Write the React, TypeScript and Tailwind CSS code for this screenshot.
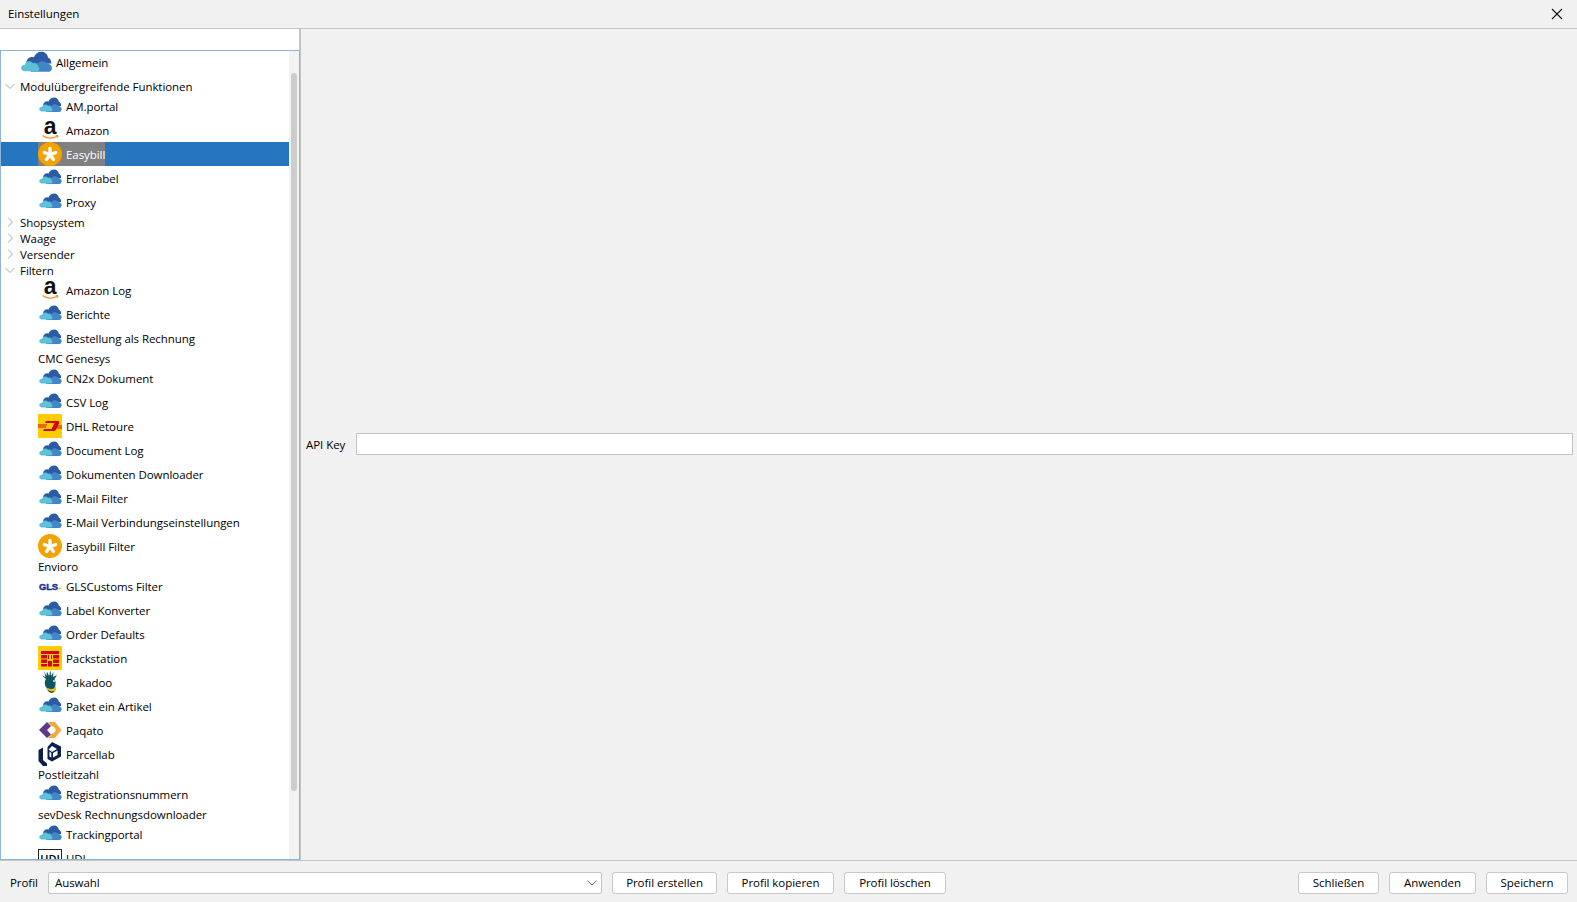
const font = "font-['Open_Sans','Noto_Sans',sans-serif]";

function Cloud({ big }: { big?: boolean }) {
  return (
    <svg viewBox="0 0 24 16" className={big ? 'w-[31px] h-[21px]' : 'w-[23px] h-[15px] mb-[3px]'}>
      <path d="M4 9C4.5 5.5 7.5 4 10 4.8C11 2 13 .5 16 .5C18.5.5 20.5 2.5 21 5C22.5 5.5 23.5 7 23.5 9.5L5 10Z" fill="#2d5aa5" />
      <path d="M9 16C6 16 5.5 13 7.5 11.5C8 9 11 8 13 9.5C14.5 7.5 18 7 20 9.5C22.5 9.5 24 11.5 24 13C24 15 22.5 16 20.5 16Z" fill="#4286c6" />
      <path d="M3 15.5C1 15.5 0 14 0 13C0 11.5 1.5 10.5 3 10.5C3.5 7.5 7.5 7 9.5 9.5C11.5 9 13.5 10.5 13.5 12.5C14.5 13 14.5 15.5 12.5 15.5Z" fill="#5cc1d4" />
    </svg>
  );
}

function AmazonIcon() {
  return (
    <svg viewBox="0 0 24 24" className="w-[24px] h-[24px] overflow-visible">
      <text x="12" y="16" textAnchor="middle" fontSize="23" fontWeight="700" fontFamily="'Liberation Sans', sans-serif" fill="#111">a</text>
      <path d="M4.5 17.5C9 21 15 21 19.5 18" fill="none" stroke="#f0962a" strokeWidth="1.3" />
      <path d="M17.5 17.5L20 17.5L19.5 20" fill="none" stroke="#f0962a" strokeWidth="1" />
    </svg>
  );
}

function EasybillIcon() {
  return (
    <svg viewBox="0 0 24 24" className="w-[24px] h-[24px]">
      <circle cx="12" cy="12" r="12" fill="#f5a100" />
      <g stroke="#fff" strokeWidth="3.4" strokeLinecap="round">
        <path d="M12 12.5V6.5" />
        <path d="M12 12.5L17.7 10.6" />
        <path d="M12 12.5L15.5 17.4" />
        <path d="M12 12.5L8.5 17.4" />
        <path d="M12 12.5L6.3 10.6" />
      </g>
    </svg>
  );
}

function DhlIcon() {
  return (
    <svg viewBox="0 0 24 24" className="w-[24px] h-[24px]">
      <rect width="24" height="24" fill="#ffcc00" />
      <g fill="#d40511">
        <path d="M0 10.5H9L8.5 11.5H0Z" />
        <path d="M0 12.5H8.5L8 13.5H0Z" />
        <path d="M8 7H20C21.5 7 21.5 8.5 21 9.5L18 15.5C17.5 16.5 16.5 17 15.5 17H5L6 15H13.5L16.5 9H7Z" />
        <path d="M19 11.5H24V12.5H18.5Z" />
        <path d="M18 13.5H24V14.5H17.5Z" />
      </g>
    </svg>
  );
}

function GlsIcon() {
  return (
    <svg viewBox="0 0 24 24" className="w-[24px] h-[24px]">
      <text x="1" y="15.5" fontSize="9.5" fontWeight="700" fontFamily="'Liberation Sans', sans-serif" fill="#15308c" stroke="#15308c" strokeWidth=".4" letterSpacing="-.2">GLS</text>
      <rect x="21" y="13.5" width="2" height="1.6" fill="#f5c400" />
    </svg>
  );
}

function PackstationIcon() {
  return (
    <svg viewBox="0 0 24 24" className="w-[24px] h-[24px]">
      <rect width="24" height="24" fill="#ffcc00" />
      <path d="M3 5H21V8H3Z" fill="#d40511" />
      <g fill="#d40511">
        <rect x="3" y="9" width="6" height="3.5" />
        <rect x="3" y="13.5" width="6" height="3.5" />
        <rect x="3" y="18" width="6" height="2.5" />
        <rect x="15" y="9" width="6" height="3.5" />
        <rect x="15" y="13.5" width="6" height="3.5" />
        <rect x="15" y="18" width="6" height="2.5" />
        <rect x="10" y="9" width="4" height="4" />
        <rect x="10" y="15" width="4" height="5.5" />
      </g>
      <rect x="11" y="9" width="2" height="4" fill="#ffcc00" />
    </svg>
  );
}

function PakadooIcon() {
  return (
    <svg viewBox="0 0 24 24" className="w-[24px] h-[24px]">
      <path d="M6 1L8.5 6L9 1.5L11 6L12.5 0L13 6L15.5 2L15 7L19 5L16.5 9C18 11 18 16 16 19L9 19C6 15 6.5 11 8 9L4 5.5L7.5 7Z" fill="#0f5660" />
      <path d="M8 17C10 23 16 25 18 20C18.5 18 18 16.5 17.5 16C17 19 13 20.5 8 17Z" fill="#e4c21c" />
      <path d="M9 19C10.5 23 14.5 24 16.5 21C13.5 22 11 21 9 19Z" fill="#173a55" />
      <circle cx="16" cy="11" r="1" fill="#d7f0f0" />
    </svg>
  );
}

function PaqatoIcon() {
  return (
    <svg viewBox="0 0 24 24" className="w-[24px] h-[24px]">
      <path d="M9 4L13 8L9 12L13 16.5L9 20L1 12Z" fill="#5b3a8c" />
      <path d="M10 4H17L23.5 12L17 20H10L14 15.5H15.5L18 12L15.5 8.5H14Z" fill="#f2a93b" />
    </svg>
  );
}

function ParcellabIcon() {
  return (
    <svg viewBox="0 0 24 24" className="w-[24px] h-[24px]">
      <path d="M14 0L23 4.5V14.5L14 19.5L9.5 17V5Z" fill="#0d1f4c" />
      <path d="M14 4L19 7L14 10L10.5 7.5ZM11.5 9.5L13.3 11V15.5L11.5 14.5ZM15 11L19.5 8.5V13L15 15.5Z" fill="#fff" />
      <path d="M.5 8L5 5.5V18L9 21.5V24H5L.5 19Z" fill="#0d1f4c" />
    </svg>
  );
}

function UdiIcon() {
  return (
    <div className="w-[24px] h-[18px] border border-[#222] bg-white flex items-center justify-center text-[11px] font-semibold leading-none">
      UDI
    </div>
  );
}

type Row = { label: string; icon?: React.ReactNode; kind?: 'group' | 'text'; open?: boolean; selected?: boolean };

const cloud = <Cloud />;

const rows: Row[] = [
  { label: 'Modulübergreifende Funktionen', kind: 'group', open: true },
  { label: 'AM.portal', icon: cloud },
  { label: 'Amazon', icon: <AmazonIcon /> },
  { label: 'Easybill', icon: <EasybillIcon />, selected: true },
  { label: 'Errorlabel', icon: cloud },
  { label: 'Proxy', icon: cloud },
  { label: 'Shopsystem', kind: 'group' },
  { label: 'Waage', kind: 'group' },
  { label: 'Versender', kind: 'group' },
  { label: 'Filtern', kind: 'group', open: true },
  { label: 'Amazon Log', icon: <AmazonIcon /> },
  { label: 'Berichte', icon: cloud },
  { label: 'Bestellung als Rechnung', icon: cloud },
  { label: 'CMC Genesys', kind: 'text' },
  { label: 'CN2x Dokument', icon: cloud },
  { label: 'CSV Log', icon: cloud },
  { label: 'DHL Retoure', icon: <DhlIcon /> },
  { label: 'Document Log', icon: cloud },
  { label: 'Dokumenten Downloader', icon: cloud },
  { label: 'E-Mail Filter', icon: cloud },
  { label: 'E-Mail Verbindungseinstellungen', icon: cloud },
  { label: 'Easybill Filter', icon: <EasybillIcon /> },
  { label: 'Envioro', kind: 'text' },
  { label: 'GLSCustoms Filter', icon: <GlsIcon /> },
  { label: 'Label Konverter', icon: cloud },
  { label: 'Order Defaults', icon: cloud },
  { label: 'Packstation', icon: <PackstationIcon /> },
  { label: 'Pakadoo', icon: <PakadooIcon /> },
  { label: 'Paket ein Artikel', icon: cloud },
  { label: 'Paqato', icon: <PaqatoIcon /> },
  { label: 'Parcellab', icon: <ParcellabIcon /> },
  { label: 'Postleitzahl', kind: 'text' },
  { label: 'Registrationsnummern', icon: cloud },
  { label: 'sevDesk Rechnungsdownloader', kind: 'text' },
  { label: 'Trackingportal', icon: cloud },
  { label: 'UDI', icon: <UdiIcon /> },
];

function TreeRow({ row }: { row: Row }) {
  if (row.kind === 'group') {
    return (
      <div className="h-[16px] flex items-center">
        <svg viewBox="0 0 10 10" className="w-[10px] h-[10px] ml-[4px] mr-[5px]" fill="none" stroke="#a6a6a6">
          {row.open ? <path d="M.5 3L5 7.5L9.5 3" /> : <path d="M3 .5L7.5 5L3 9.5" />}
        </svg>
        <span className="pt-[2px]">{row.label}</span>
      </div>
    );
  }
  if (row.kind === 'text') {
    return <div className="h-[16px] flex items-center pl-[37px] pt-[2px]">{row.label}</div>;
  }
  return (
    <div className={row.selected ? 'h-[24px] flex items-center pl-[37px] bg-[#2675bf] text-white' : 'h-[24px] flex items-center pl-[37px]'}>
      <div className={row.selected ? 'flex items-center bg-[#808080]' : 'flex items-center'}>
        <div className="w-[24px] h-[24px] flex items-center justify-center shrink-0">{row.icon}</div>
        <span className="ml-[4px] pt-[2px] whitespace-nowrap">{row.label}</span>
      </div>
    </div>
  );
}

export default function App() {
  return (
    <div className={`${font} w-[1577px] h-[902px] flex flex-col bg-[#f1f1f1] text-[11.5px] leading-[16px] tracking-[-0.06px] text-black overflow-hidden`}>
      <div className="h-[29px] shrink-0 flex items-center justify-between pl-[8px] pr-[14px] border-b border-[#c4c4c4]">
        <span>Einstellungen</span>
        <svg viewBox="0 0 12 12" className="w-[12px] h-[12px]" fill="none" stroke="#111" strokeWidth="1.1">
          <path d="M1 1L11 11M11 1L1 11" />
        </svg>
      </div>

      <div className="flex-1 flex min-h-0">
        <div className="w-[301px] shrink-0 flex flex-col border-r border-[#c4c4c4]">
          <div className="h-[22px] shrink-0 bg-white border-b border-r border-b-[#8fb4dc] border-r-[#c4c4c4]" />
          <div className="flex-1 min-h-0 flex bg-white border-x border-b border-[#8fb4dc]">
            <div className="flex-1 min-w-0 overflow-hidden">
              <div className="h-[27px] flex items-start">
                <div className="w-[20px]" />
                <Cloud big />
                <span className="ml-[4px] mt-[4px]">Allgemein</span>
              </div>
              {rows.map((row) => (
                <TreeRow key={row.label} row={row} />
              ))}
            </div>
            <div className="w-[10px] shrink-0 bg-[#f3f3f3] pt-[22px] px-[2px]">
              <div className="h-[718px] bg-[#cdcdcd] rounded-[3px]" />
            </div>
          </div>
        </div>

        <div className="flex-1 min-w-0 flex items-center pl-[5px] pr-[4px] pb-[2px]">
          <span className="w-[50px] shrink-0 pt-[2px]">API Key</span>
          <div className="flex-1 h-[22px] bg-white border border-[#c4c4c4]" />
        </div>
      </div>

      <div className="h-[42px] shrink-0 border-t border-[#c4c4c4] flex items-center pl-[10px] pr-[9px] pt-[2px]">
        <span className="w-[38px] shrink-0">Profil</span>
        <div className="w-[554px] h-[22px] flex items-center justify-between pl-[6px] pr-[4px] bg-white border border-[#c4c4c4] rounded-[2px]">
          <span>Auswahl</span>
          <svg viewBox="0 0 10 6" className="w-[10px] h-[6px]" fill="none" stroke="#666">
            <path d="M.5 .5L5 5L9.5 .5" />
          </svg>
        </div>
        <div className="flex gap-[10px] ml-[10px]">
          <button className="w-[105px] h-[22px] bg-white border border-[#c8c8c8] rounded-[3px]">Profil erstellen</button>
          <button className="w-[107px] h-[22px] bg-white border border-[#c8c8c8] rounded-[3px]">Profil kopieren</button>
          <button className="w-[102px] h-[22px] bg-white border border-[#c8c8c8] rounded-[3px]">Profil löschen</button>
        </div>
        <div className="flex gap-[10px] ml-auto">
          <button className="w-[81px] h-[22px] bg-white border border-[#c8c8c8] rounded-[3px]">Schließen</button>
          <button className="w-[87px] h-[22px] bg-white border border-[#c8c8c8] rounded-[3px]">Anwenden</button>
          <button className="w-[82px] h-[22px] bg-white border border-[#c8c8c8] rounded-[3px]">Speichern</button>
        </div>
      </div>
    </div>
  );
}
